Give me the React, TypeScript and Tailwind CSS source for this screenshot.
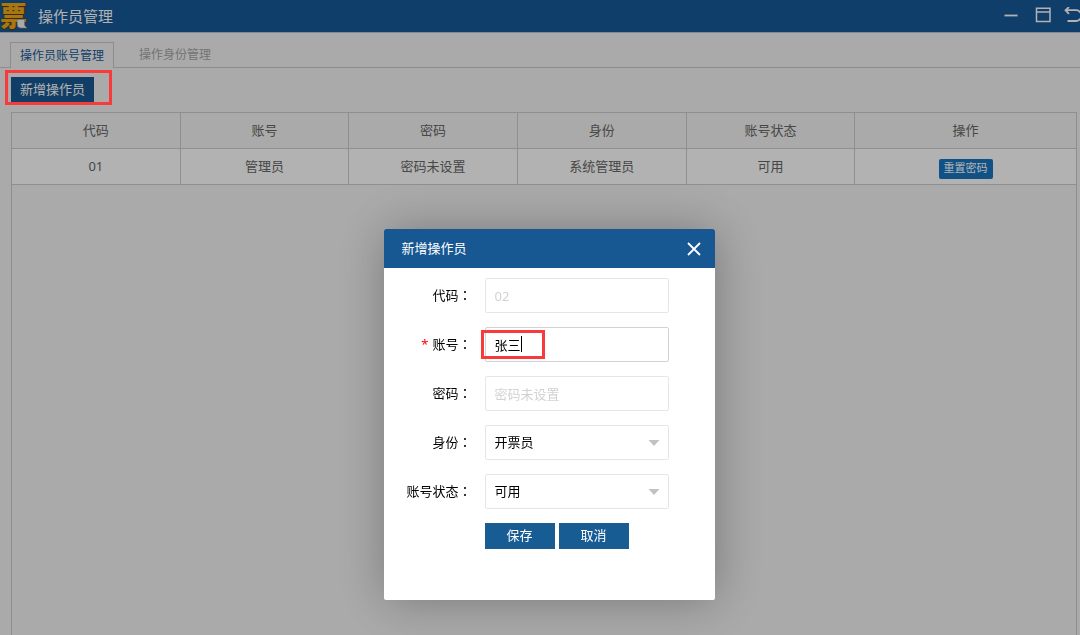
import React, { useState } from 'react';

const COLUMNS = ['代码', '账号', '密码', '身份', '账号状态', '操作'];

const OPERATORS = [
  { code: '01', account: '管理员', password: '密码未设置', role: '系统管理员', status: '可用' },
];

const FIELD =
  'block w-full h-[35px] rounded-xs border bg-white px-[9px] text-[13px] text-black outline-none placeholder:text-[#d2d2d2]';

const CELL = 'h-9 border-r border-b border-[#cdcdcd] p-0 font-normal last:border-r-0';

function AppLogo() {
  return (
    <div className="relative w-7 shrink-0">
      <span className="block text-[27px] leading-8 font-black text-[#f0ab1c] [text-shadow:0_1px_1px_#5c3b06,1px_0_1px_#5c3b06]">
        票
      </span>
      <svg className="absolute left-4 top-[18px]" width="12" height="11" viewBox="0 0 12 11">
        <path d="M1 1.5h7.5v6l2.5 2.5H4L1.5 8.5Z" fill="#eef2f8" stroke="#8a93a3" strokeWidth="0.6" />
      </svg>
    </div>
  );
}

function WindowButtons() {
  return (
    <div className="flex items-center gap-3 text-white">
      <button type="button" aria-label="最小化">
        <svg className="block" width="18" height="18" viewBox="0 0 18 18" fill="none" stroke="currentColor">
          <path d="M0.5 8.5H13.5" strokeWidth="1.8" />
        </svg>
      </button>
      <button type="button" aria-label="最大化">
        <svg className="block" width="18" height="18" viewBox="0 0 18 18" fill="none" stroke="currentColor">
          <path d="M2.5 1.2H16V14.5H2.5ZM2.5 5H16" strokeWidth="1.5" />
        </svg>
      </button>
      <button type="button" aria-label="返回">
        <svg className="block" width="16" height="18" viewBox="0 0 16 18" fill="none" stroke="currentColor">
          <path d="M5 0L1.5 3.2L5 6.8M1.5 3.2H12a5.4 5.4 0 0 1 0 10.8H3.5" strokeWidth="1.8" />
        </svg>
      </button>
    </div>
  );
}

interface FormRowProps {
  id: string;
  label: string;
  required?: boolean;
  children: React.ReactNode;
}

function FormRow({ id, label, required, children }: FormRowProps) {
  return (
    <div className="flex items-center gap-[13px]">
      <label htmlFor={id} className="w-[88px] text-right whitespace-nowrap">
        {required && <span className="mr-1 text-[#f00]">*</span>}
        {label}
        <span className="font-['Noto_Sans_CJK_TC',sans-serif]">：</span>
      </label>
      <div className="relative w-[184px]">{children}</div>
    </div>
  );
}

function SelectArrow() {
  return (
    <svg className="absolute right-[9px] top-[15px] pointer-events-none" width="12" height="6" viewBox="0 0 12 6">
      <path d="M0.5 0h11L6 6Z" fill="#c2c2c2" />
    </svg>
  );
}

function AddOperatorDialog() {
  const [account, setAccount] = useState('张三');

  return (
    <div className="fixed inset-0 z-10 flex items-start justify-center bg-black/30 pl-[18px] pt-[229px]">
      <div
        role="dialog"
        aria-label="新增操作员"
        className="w-[331px] overflow-hidden rounded-xs bg-white text-[13px] text-black shadow-[1px_1px_50px_rgba(0,0,0,0.3)]"
      >
        <div className="flex h-[39px] items-center justify-between bg-[#175792] pl-[18px] pr-3.5 text-white">
          <h2>新增操作员</h2>
          <button type="button" aria-label="关闭">
            <svg className="block" width="14" height="14" viewBox="0 0 14 14" fill="none" stroke="currentColor">
              <path d="M1 1L13 13M13 1L1 13" strokeWidth="1.8" />
            </svg>
          </button>
        </div>
        <form className="flex flex-col gap-3.5 pt-2.5 pb-[51px]" onSubmit={(e) => e.preventDefault()}>
          <FormRow id="code" label="代码">
            <input id="code" className={`${FIELD} border-[#e6e6e6]`} placeholder="02" />
          </FormRow>
          <FormRow id="account" label="账号" required>
            <input
              id="account"
              className={`${FIELD} border-[#d2d2d2]`}
              value={account}
              onChange={(e) => setAccount(e.target.value)}
            />
            <span className="absolute left-9 top-[9px] h-4 w-px bg-black" />
            <span className="absolute -left-1 top-[3px] h-[29px] w-16 border-3 border-[#f93a3a]" />
          </FormRow>
          <FormRow id="password" label="密码">
            <input id="password" type="password" className={`${FIELD} border-[#e6e6e6]`} placeholder="密码未设置" />
          </FormRow>
          <FormRow id="role" label="身份">
            <select id="role" className={`${FIELD} appearance-none border-[#e6e6e6]`}>
              <option>开票员</option>
              <option>系统管理员</option>
            </select>
            <SelectArrow />
          </FormRow>
          <FormRow id="status" label="账号状态">
            <select id="status" className={`${FIELD} appearance-none border-[#e6e6e6]`}>
              <option>可用</option>
              <option>停用</option>
            </select>
            <SelectArrow />
          </FormRow>
          <div className="flex gap-1 pl-[101px] text-white">
            <button type="submit" className="h-[26px] w-[70px] bg-[#185c94]">
              保存
            </button>
            <button type="button" className="h-[26px] w-[70px] bg-[#185c94]">
              取消
            </button>
          </div>
        </form>
      </div>
    </div>
  );
}

export default function App() {
  return (
    <div className="flex min-h-screen flex-col bg-[#f4f4f4] font-['Noto_Sans','Noto_Sans_CJK_SC',sans-serif] text-[13px] text-[#666]">
      <header className="flex h-[33px] items-center border-b border-[#b9c6d3] bg-[#185998]">
        <AppLogo />
        <h1 className="ml-2.5 flex-1 text-[15px] text-white">操作员管理</h1>
        <WindowButtons />
      </header>

      <nav className="flex border-b border-[#cacaca] pl-2.5 pt-[9px] text-xs">
        <button type="button" className="-mb-px h-[26px] border border-b-0 border-[#cacaca] bg-[#f4f4f4] px-[9px] text-[#185998]">
          操作员账号管理
        </button>
        <button type="button" className="-mb-px h-[26px] px-[25px] text-[#a6a6a6]">
          操作身份管理
        </button>
      </nav>

      <main className="flex flex-1 flex-col pl-[11px] pr-[3px] pt-[9px]">
        <div className="relative self-start">
          <button type="button" className="block h-[26px] bg-[#185a92] px-[9px] text-white">
            新增操作员
          </button>
          <span className="absolute -left-1.5 -top-[7px] z-20 h-[35px] w-[107px] border-3 border-[#f93a3a]" />
        </div>

        <div className="mt-[9px] flex-1 border border-b-0 border-[#cdcdcd]">
          <table className="w-full table-fixed border-separate border-spacing-0 text-center">
            <colgroup>
              <col className="w-[15.85%]" />
              <col className="w-[15.85%]" />
              <col className="w-[15.85%]" />
              <col className="w-[15.85%]" />
              <col className="w-[15.85%]" />
              <col />
            </colgroup>
            <thead>
              <tr>
                {COLUMNS.map((name) => (
                  <th key={name} className={CELL}>
                    {name}
                  </th>
                ))}
              </tr>
            </thead>
            <tbody>
              {OPERATORS.map((op) => (
                <tr key={op.code} className="bg-white">
                  <td className={CELL}>{op.code}</td>
                  <td className={CELL}>{op.account}</td>
                  <td className={CELL}>{op.password}</td>
                  <td className={CELL}>{op.role}</td>
                  <td className={CELL}>{op.status}</td>
                  <td className={CELL}>
                    <button type="button" className="mx-auto mt-1 block h-5 rounded-xs bg-[#1775c0] px-[5px] text-[11px] text-white">
                      重置密码
                    </button>
                  </td>
                </tr>
              ))}
            </tbody>
          </table>
        </div>
      </main>

      <AddOperatorDialog />
    </div>
  );
}
